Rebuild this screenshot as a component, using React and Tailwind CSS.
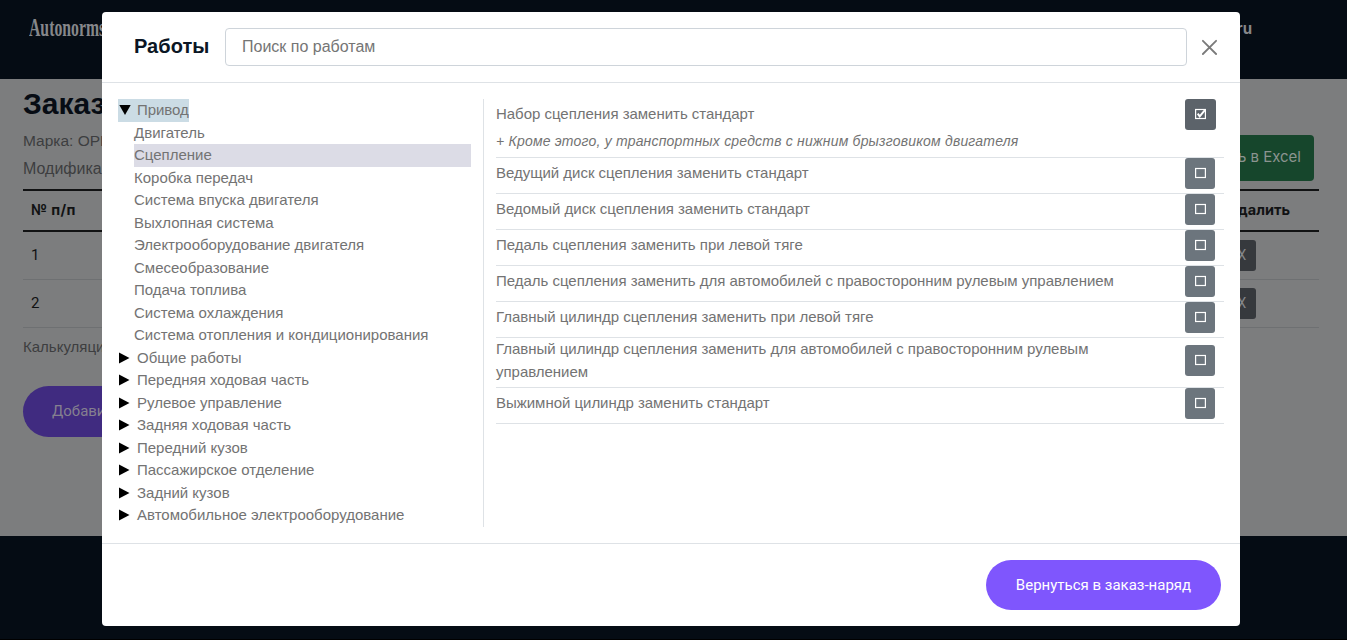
const engineSections = [
  "Двигатель",
  "Сцепление",
  "Коробка передач",
  "Система впуска двигателя",
  "Выхлопная система",
  "Электрооборудование двигателя",
  "Смесеобразование",
  "Подача топлива",
  "Система охлаждения",
  "Система отопления и кондиционирования",
];

const groups = [
  "Общие работы",
  "Передняя ходовая часть",
  "Рулевое управление",
  "Задняя ходовая часть",
  "Передний кузов",
  "Пассажирское отделение",
  "Задний кузов",
  "Автомобильное электрооборудование",
];

const works = [
  {
    name: "Набор сцепления заменить стандарт",
    note: "+ Кроме этого, у транспортных средств с нижним брызговиком двигателя",
    checked: true,
  },
  { name: "Ведущий диск сцепления заменить стандарт" },
  { name: "Ведомый диск сцепления заменить стандарт" },
  { name: "Педаль сцепления заменить при левой тяге" },
  { name: "Педаль сцепления заменить для автомобилей с правосторонним рулевым управлением" },
  { name: "Главный цилиндр сцепления заменить при левой тяге" },
  { name: "Главный цилиндр сцепления заменить для автомобилей с правосторонним рулевым управлением" },
  { name: "Выжимной цилиндр заменить стандарт" },
];

function Triangle({ open }) {
  return (
    <svg className="h-[12px] w-[12px] shrink-0 overflow-visible" viewBox="0 0 12 12">
      <path d={open ? "M1.3 1H12.7L7 11Z" : "M1 0.5V11.5L11.5 6Z"} fill="#000" />
    </svg>
  );
}

function CheckButton({ checked }) {
  return (
    <button
      className={
        checked
          ? "flex h-[31px] w-[31px] shrink-0 justify-start rounded-[3px] bg-[#5c636a] pt-[9px] pl-[9px]"
          : "mr-px flex h-[31px] w-[30px] shrink-0 justify-start rounded-[3px] bg-[#6c757d] pt-[9px] pl-[9px]"
      }
    >
      <svg className="h-[13px] w-[13px]" viewBox="0 0 13 13" fill="none" stroke="#fff">
        <rect x="1.6" y="1.5" width="9.8" height="9" strokeWidth="1.2" />
        {checked && <path d="M3.7 5.6L5.7 8.4L11.3 1.6" strokeWidth="1.9" />}
      </svg>
    </button>
  );
}

function WorkRow({ work }) {
  return (
    <div className="border-b border-[#dee2e6] pb-1">
      <div className="flex items-center justify-between pr-2">
        <div className="w-[675px] leading-[22.5px] tracking-[-0.025px]">{work.name}</div>
        <CheckButton checked={work.checked} />
      </div>
      {work.note && (
        <div className="h-[23px] text-[14px] leading-[22px] tracking-[0.2px] italic">{work.note}</div>
      )}
    </div>
  );
}

function OrderPage() {
  return (
    <div className="flex h-[640px] flex-col overflow-hidden bg-[#7c7d7e]">
      <header className="flex h-[79px] shrink-0 justify-between bg-[#050c14] pr-[95px] pl-[29px]">
        <div className="origin-left scale-x-[0.63] pt-[12px] font-['Liberation_Serif',serif] text-[25px] leading-[32px] font-bold text-[#85878a]">
          Autonorms
        </div>
        <div className="pt-[17px] font-['Inter',sans-serif] text-[15px] leading-[24px] font-bold text-[#85878a]">
          info@autonorms.ru
        </div>
      </header>
      <main className="h-[457px] shrink-0 pr-[28px] pl-[23px] text-[#3d3e40]">
        <div className="flex h-[110px] justify-between">
          <div>
            <h1 className="pt-[8px] text-[30px] leading-[34px] font-bold text-[#070c14]">Заказ</h1>
            <p className="pt-[8px] text-[15.5px] leading-[24px]">Марка: OPEL</p>
            <p className="pt-[4px] text-[16px] leading-[24px]">Модификация</p>
          </div>
          <button className="mt-[56px] mr-[5px] h-[46px] w-[180px] rounded bg-[#16462c] pr-[13px] pb-[2px] text-right font-['Inter',sans-serif] text-[15px] text-[#8b9490]">
            Скачать в Excel
          </button>
        </div>
        <div className="flex h-[43px] items-center justify-between border-y-2 border-[#111213] pr-[29px] pb-[2px] pl-2 font-['Inter',sans-serif] text-[14.5px] font-bold text-[#111213]">
          <span className="tracking-[0.4px]">№ п/п</span>
          <span>Удалить</span>
        </div>
        {["1", "2"].map((n) => (
          <div
            key={n}
            className="flex h-12 items-center justify-between border-b border-[#6e7072] pr-[63px] pl-2 font-['Roboto',sans-serif] text-[15px] text-[#111213]"
          >
            <span>{n}</span>
            <button className="h-[31px] w-[28px] rounded-[3px] bg-[#36393d] font-['Roboto',sans-serif] text-[14px] text-[#85878a]">
              X
            </button>
          </div>
        ))}
        <p className="pt-[7px] text-[15px] leading-[24px]">Калькуляция</p>
        <button className="mt-[27px] h-[51px] w-[190px] rounded-full bg-[#402b80] pl-[29px] text-left font-['Roboto',sans-serif] text-[15px] text-[#85808f]">
          Добавить
        </button>
      </main>
      <footer className="grow border-b border-black bg-[#050c14]" />
    </div>
  );
}

function WorksDialog() {
  return (
    <div className="absolute top-[12px] left-[102px] flex h-[614px] w-[1138px] flex-col rounded bg-white text-[15px] text-[#737373]">
      <div className="flex h-[71px] shrink-0 items-center border-b border-[#dee2e6] pr-[22px] pl-8">
        <h2 className="w-[91px] pb-[2px] text-[20px] leading-[24px] font-bold tracking-[0.03px] text-[#0b1624]">
          Работы
        </h2>
        <input
          className="h-[38px] w-[962px] rounded border border-[#ced4da] px-4 text-[16px] placeholder:text-[#757575]"
          placeholder="Поиск по работам"
        />
        <button className="ml-auto">
          <svg className="h-[16px] w-[16px]" viewBox="0 0 16 16" fill="none" stroke="#7a7a7a" strokeWidth="1.8" strokeLinecap="round">
            <path d="M0.9 1.8L14.1 15M14.1 1.8L0.9 15" />
          </svg>
        </button>
      </div>
      <div className="flex h-[460px] shrink-0 p-4">
        <div className="w-[366px] border-r border-[#dee2e6] pr-3 leading-[22.5px]">
          <div className="flex w-[71px] items-center gap-[7px] bg-[#cbdce5] whitespace-nowrap">
            <Triangle open />
            <span className="tracking-[-0.05px]">Привод</span>
          </div>
          <ul className="pl-4">
            {engineSections.map((name) => (
              <li key={name} className={name === "Сцепление" ? "bg-[#dcdce6]" : ""}>
                {name}
              </li>
            ))}
          </ul>
          {groups.map((name) => (
            <div key={name} className="flex items-center gap-[7px]">
              <Triangle />
              <span>{name}</span>
            </div>
          ))}
        </div>
        <div className="w-[740px] pl-[12px]">
          {works.map((work) => (
            <WorkRow key={work.name} work={work} />
          ))}
        </div>
      </div>
      <div className="flex grow items-start justify-end border-t border-[#dee2e6] pt-4 pr-[19px]">
        <button className="h-[50px] w-[235px] rounded-full bg-[#7f56fd] font-['Roboto',sans-serif] text-[15px] text-white">
          Вернуться в заказ-наряд
        </button>
      </div>
    </div>
  );
}

export default function App() {
  return (
    <div className="relative h-[640px] w-[1347px] overflow-hidden font-['Liberation_Sans',Arial,sans-serif]">
      <OrderPage />
      <WorksDialog />
    </div>
  );
}
